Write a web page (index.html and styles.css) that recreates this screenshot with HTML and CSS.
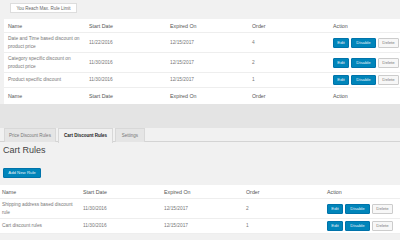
FILE: index.html
```
<html>
    <head>
        <title>Woo Discount Rules</title>
        <link rel="stylesheet" href="styles.css">
    </head>
    <body>
        <div class="limit-bar">
            <button class="limit-button">You Reach Max. Rule Limit</button>
        </div>

        <table class="rules price-rules">
            <thead>
                <tr><th>Name</th><th>Start Date</th><th>Expired On</th><th>Order</th><th>Action</th></tr>
            </thead>
            <tbody>
                <tr>
                    <td>Date and Time based discount on product price</td>
                    <td>11/22/2016</td><td>12/15/2017</td><td>4</td>
                    <td class="actions"><button class="btn primary">Edit</button><button class="btn primary">Disable</button><button class="btn">Delete</button></td>
                </tr>
                <tr>
                    <td>Category specific discount on product price</td>
                    <td>11/30/2016</td><td>12/15/2017</td><td>2</td>
                    <td class="actions"><button class="btn primary">Edit</button><button class="btn primary">Disable</button><button class="btn">Delete</button></td>
                </tr>
                <tr>
                    <td>Product specific discount</td>
                    <td>11/30/2016</td><td>12/15/2017</td><td>1</td>
                    <td class="actions"><button class="btn primary">Edit</button><button class="btn primary">Disable</button><button class="btn">Delete</button></td>
                </tr>
            </tbody>
            <tfoot>
                <tr><th>Name</th><th>Start Date</th><th>Expired On</th><th>Order</th><th>Action</th></tr>
            </tfoot>
        </table>

        <div class="band"></div>

        <div class="tabs">
            <div class="tab">Price Discount Rules</div>
            <div class="tab active">Cart Discount Rules</div>
            <div class="tab">Settings</div>
        </div>

        <h2 class="section-title">Cart Rules</h2>
        <button class="btn primary add-button">Add New Rule</button>

        <table class="rules cart-rules">
            <thead>
                <tr><th>Name</th><th>Start Date</th><th>Expired On</th><th>Order</th><th>Action</th></tr>
            </thead>
            <tbody>
                <tr>
                    <td>Shipping address based discount rule</td>
                    <td>11/30/2016</td><td>12/15/2017</td><td>2</td>
                    <td class="actions"><button class="btn primary">Edit</button><button class="btn primary">Disable</button><button class="btn">Delete</button></td>
                </tr>
                <tr>
                    <td>Cart discount rules</td>
                    <td>11/30/2016</td><td>12/15/2017</td><td>1</td>
                    <td class="actions"><button class="btn primary">Edit</button><button class="btn primary">Disable</button><button class="btn">Delete</button></td>
                </tr>
            </tbody>
        </table>
    </body>
</html>
```

FILE: styles.css
```
* {
    font-family: 'Liberation Sans', Arial, sans-serif;
    box-sizing: border-box;
}

body {
    margin: 0;
    background-color: #f1f1f1;
    color: #555;
    overflow: hidden;
}

.limit-bar {
    padding: 3px 10px 6px 10px;
}

.limit-button {
    display: block;
    background-color: #fff;
    border: 1px solid #ddd;
    color: #666;
    font-size: 4.5px;
    height: 10px;
    width: 67px;
    padding: 0;
    margin: 0;
}

.rules {
    border-collapse: collapse;
    background-color: #fff;
    table-layout: fixed;
}

.price-rules {
    margin-left: 4px;
    width: 400px;
}

.cart-rules {
    width: 404px;
    margin-left: -2px;
}

.rules th,
.rules td {
    text-align: left;
    vertical-align: middle;
    padding: 3px 4px 2px 4px;
    font-size: 4.8px;
    line-height: 7.5px;
    font-weight: normal;
    color: #777;
}

.rules th {
    font-size: 5.3px;
    color: #555;
    line-height: 8px;
}

.rules th:nth-child(1), .rules td:nth-child(1) { width: 81px; }
.rules th:nth-child(2), .rules td:nth-child(2) { width: 81px; }
.rules th:nth-child(3), .rules td:nth-child(3) { width: 82px; }
.rules th:nth-child(4), .rules td:nth-child(4) { width: 81px; }

.rules thead tr,
.rules tbody tr {
    border-bottom: 1px solid #eee;
}

.rules tbody td {
    padding-top: 2px;
    padding-bottom: 2px;
}

.price-rules tfoot th {
    padding-top: 4px;
    padding-bottom: 4px;
}

.actions {
    white-space: nowrap;
}

.btn {
    display: inline-block;
    height: 10px;
    padding: 0;
    margin: 0 2px 0 0;
    font-size: 4.3px;
    font-weight: normal;
    line-height: 8px;
    border: 1px solid #ccc;
    background-color: #f7f7f7;
    color: #777;
    border-radius: 1px;
    vertical-align: middle;
}

.btn.primary {
    background-color: #0085ba;
    border-color: #0073aa;
    color: #e8f2f8;
}

.actions .btn:nth-child(1) { width: 16px; }
.actions .btn:nth-child(2) { width: 25px; }
.actions .btn:nth-child(3) { width: 21px; }

.band {
    height: 24px;
    background-color: #e4e4e4;
}

.tabs {
    display: flex;
    gap: 2px;
    padding-left: 4px;
    border-bottom: 1px solid #d4d4d4;
    height: 14px;
}

.tab {
    font-size: 4.5px;
    line-height: 13px;
    height: 14px;
    padding: 0;
    text-align: center;
    white-space: nowrap;
    background-color: #e5e5e5;
    border: 1px solid #d8d8d8;
    border-bottom: none;
    color: #777;
}

.tab:nth-child(1) { width: 52px; }
.tab:nth-child(2) { width: 55px; }
.tab:nth-child(3) { width: 30px; }

.tab.active {
    background-color: #f1f1f1;
    color: #222;
    font-weight: bold;
    margin-bottom: -1px;
    height: 15px;
}

.section-title {
    font-size: 9px;
    font-weight: normal;
    color: #444;
    margin: 2px 0 0 3px;
    line-height: 12px;
}

.add-button {
    margin: 12px 0 7px 3px;
    width: 38px;
    height: 10px;
    padding: 0;
    display: block;
}
```
